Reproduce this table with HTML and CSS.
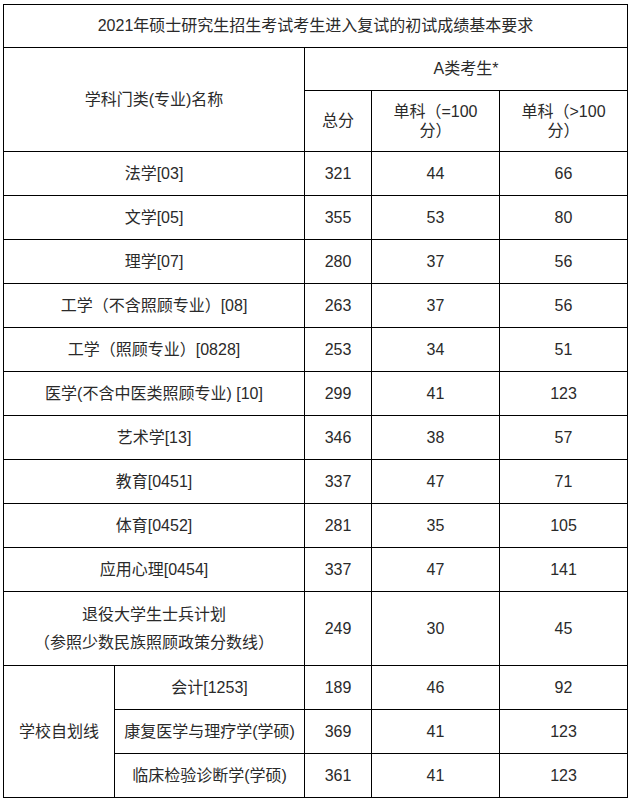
FILE: index.html
```html
<!DOCTYPE html>
<html lang="zh-CN">
<head>
<meta charset="utf-8">
<title>2021年硕士研究生招生考试考生进入复试的初试成绩基本要求</title>
<link rel="stylesheet" href="styles.css">
</head>
<body>
<div class="page">
<table class="score-table">
  <colgroup>
    <col class="c-group">
    <col class="c-name">
    <col class="c-total">
    <col class="c-eq">
    <col class="c-gt">
  </colgroup>
  <tr class="r-title"><td colspan="5">2021年硕士研究生招生考试考生进入复试的初试成绩基本要求</td></tr>
  <tr class="r-head"><td colspan="2" rowspan="2">学科门类(专业)名称</td><td colspan="3">A类考生*</td></tr>
  <tr class="r-sub"><td>总分</td><td class="wrap">单科（=100分）</td><td class="wrap">单科（&gt;100分）</td></tr>
  <tr class="r-data"><td colspan="2">法学[03]</td><td>321</td><td>44</td><td>66</td></tr>
  <tr class="r-data"><td colspan="2">文学[05]</td><td>355</td><td>53</td><td>80</td></tr>
  <tr class="r-data"><td colspan="2">理学[07]</td><td>280</td><td>37</td><td>56</td></tr>
  <tr class="r-data"><td colspan="2">工学（不含照顾专业）[08]</td><td>263</td><td>37</td><td>56</td></tr>
  <tr class="r-data"><td colspan="2">工学（照顾专业）[0828]</td><td>253</td><td>34</td><td>51</td></tr>
  <tr class="r-data"><td colspan="2">医学(不含中医类照顾专业) [10]</td><td>299</td><td>41</td><td>123</td></tr>
  <tr class="r-data"><td colspan="2">艺术学[13]</td><td>346</td><td>38</td><td>57</td></tr>
  <tr class="r-data"><td colspan="2">教育[0451]</td><td>337</td><td>47</td><td>71</td></tr>
  <tr class="r-data"><td colspan="2">体育[0452]</td><td>281</td><td>35</td><td>105</td></tr>
  <tr class="r-data"><td colspan="2">应用心理[0454]</td><td>337</td><td>47</td><td>141</td></tr>
  <tr class="r-tall"><td colspan="2"><div class="line">退役大学生士兵计划</div><div class="line">（参照少数民族照顾政策分数线）</div></td><td>249</td><td>30</td><td>45</td></tr>
  <tr class="r-data"><td rowspan="3">学校自划线</td><td>会计[1253]</td><td>189</td><td>46</td><td>92</td></tr>
  <tr class="r-data"><td>康复医学与理疗学(学硕)</td><td>369</td><td>41</td><td>123</td></tr>
  <tr class="r-data"><td>临床检验诊断学(学硕)</td><td>361</td><td>41</td><td>123</td></tr>
</table>
</div>
</body>
</html>
```

FILE: styles.css
```css
html, body {
  margin: 0;
  padding: 0;
  background: #fff;
}

.page {
  padding: 4px 0 0 3px;
}

.score-table {
  border-collapse: collapse;
  table-layout: fixed;
  width: 624px;
  font-family: "Liberation Sans", "Noto Sans CJK SC", sans-serif;
  font-size: 16px;
  color: #2a2a2a;
}

.score-table td {
  border: 1px solid #000;
  text-align: center;
  vertical-align: middle;
  padding: 0 8px;
  line-height: 20px;
}

.score-table td.wrap {
  padding: 0 18px;
  line-height: 19px;
  text-spacing-trim: space-all;
}

.c-group { width: 111px; }
.c-name { width: 190px; }
.c-total { width: 67px; }
.c-eq { width: 128px; }
.c-gt { width: 128px; }

.r-title { height: 43px; }
.r-head { height: 43px; }
.r-sub { height: 61px; }
.r-data { height: 44px; }
.r-tall { height: 74px; }

.r-tall .line {
  line-height: 28px;
}
```
